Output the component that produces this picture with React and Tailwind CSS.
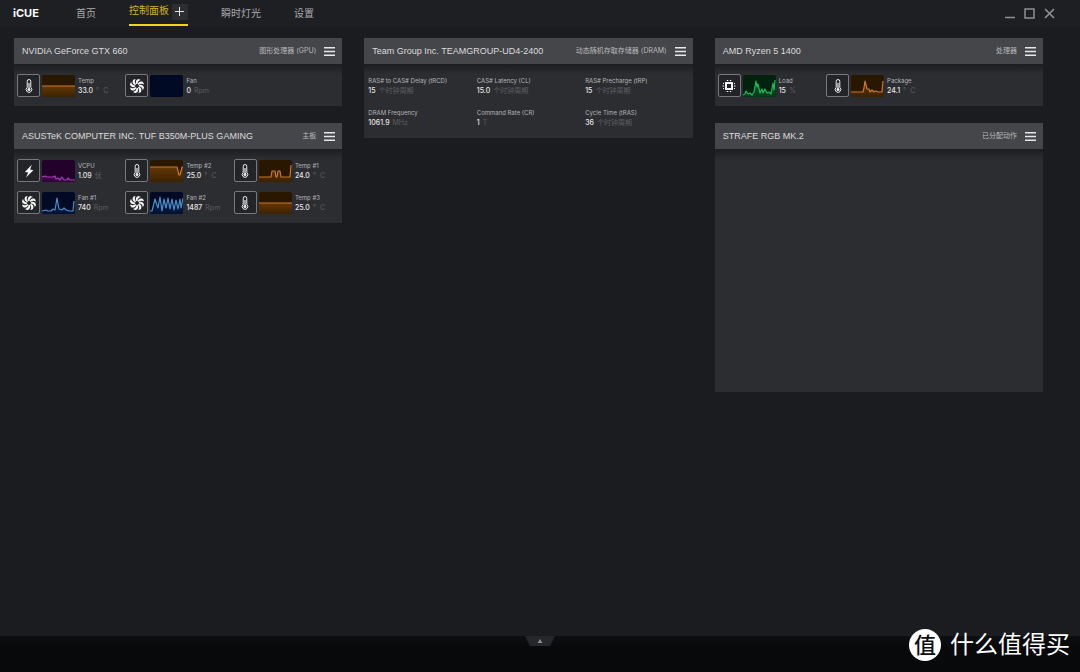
import React, { useState } from 'react';

const tabs = ['首页', '控制面板', '瞬时灯光', '设置'];

const columns = [
  [
    {
      title: 'NVIDIA GeForce GTX 660',
      kind: '图形处理器 (GPU)',
      sensors: [
        { icon: 'temp', color: 'orange', label: 'Temp', value: '33.0', unit: '°  C', line: '0,11 33,11' },
        { icon: 'fan', color: 'blue', label: 'Fan', value: '0', unit: 'Rpm', line: '' },
      ],
    },
    {
      title: 'ASUSTeK COMPUTER INC. TUF B350M-PLUS GAMING',
      kind: '主板',
      sensors: [
        { icon: 'volt', color: 'purple', label: 'VCPU', value: '1.09', unit: '伏', line: '0,17 3,16 5,17 11,17 13,16 14,19 16,18 18,20 20,17 22,20 25,20 26,18 28,20 33,20' },
        { icon: 'temp', color: 'orange', label: 'Temp #2', value: '25.0', unit: '°  C', line: '0,7 27,7 29,15 30,15 32,7 33,7' },
        { icon: 'temp', color: 'orange', label: 'Temp #1', value: '24.0', unit: '°  C', line: '0,17 12,17 13,11 16,11 17,17 18,17 19,11 21,11 22,17 31,17 32,5' },
        { icon: 'fan', color: 'blue', label: 'Fan #1', value: '740', unit: 'Rpm', line: '0,19 4,18 6,19 9,19 11,17 13,18 15,6 17,17 20,18 22,16 24,18 27,19 31,19 32,9' },
        { icon: 'fan', color: 'blue', label: 'Fan #2', value: '1487', unit: 'Rpm', line: '0,19 2,19 5,7 8,16 10,5 12,19 14,7 16,16 18,6 20,17 22,7 24,18 26,8 28,17 30,7 31,16 33,6' },
        { icon: 'temp', color: 'orange', label: 'Temp #3', value: '25.0', unit: '°  C', line: '0,11 33,11' },
      ],
    },
  ],
  [
    {
      title: 'Team Group Inc. TEAMGROUP-UD4-2400',
      kind: '动态随机存取存储器 (DRAM)',
      sensors: [
        { label: 'RAS# to CAS# Delay (tRCD)', value: '15', unit: '个时钟周期' },
        { label: 'CAS# Latency (CL)', value: '15.0', unit: '个时钟周期' },
        { label: 'RAS# Precharge (tRP)', value: '15', unit: '个时钟周期' },
        { label: 'DRAM Frequency', value: '1061.9', unit: 'MHz' },
        { label: 'Command Rate (CR)', value: '1', unit: 'T' },
        { label: 'Cycle Time (tRAS)', value: '36', unit: '个时钟周期' },
      ],
    },
  ],
  [
    {
      title: 'AMD Ryzen 5 1400',
      kind: '处理器',
      sensors: [
        { icon: 'cpu', color: 'green', label: 'Load', value: '15', unit: '%', line: '0,20 2,19 3,16 5,19 7,18 9,20 11,17 13,6 14,12 15,9 17,18 19,14 20,18 22,14 24,18 26,17 28,19 30,8 31,15 32,5' },
        { icon: 'temp', color: 'orange', label: 'Package', value: '24.1', unit: '°  C', line: '0,17 12,17 13,13 14,6 16,14 18,14 19,17 21,15 23,17 25,16 27,17 31,17 32,6' },
      ],
    },
    { title: 'STRAFE RGB MK.2', kind: '已分配动作', sensors: [] },
  ],
];

const chartColors = {
  orange: { bg: '#291700', fill: '#633803', low: '#3c2200', stroke: '#c9782e' },
  blue: { bg: '#010a24', fill: '#04204d', low: '#021233', stroke: '#4d8fc4' },
  purple: { bg: '#22022b', fill: '#4a0a56', low: '#2e053a', stroke: '#a63ab0' },
  green: { bg: '#02210f', fill: '#06602b', low: '#033a19', stroke: '#1fb85a' },
};

const blades = [0, 45, 90, 135, 180, 225, 270, 315];

const SensorIcon = ({ type }) => {
  if (type === 'temp') {
    return (
      <svg viewBox="0 0 16 16" className="w-4 h-4" fill="none" stroke="#eceded">
        <path d="M6.200 9.400V3.300a1.800 1.800 0 0 1 3.600 0v6.100a2.800 2.800 0 1 1-3.600 0Z" strokeWidth="1" />
        <path d="M8 5v6" strokeWidth="1.200" />
        <circle cx="8" cy="11.600" r="1.500" fill="#eceded" stroke="none" />
      </svg>
    );
  }
  if (type === 'fan') {
    return (
      <svg viewBox="0 0 16 16" className="w-4 h-4" fill="#f4f4f4">
        {blades.map((a) => (
          <path key={a} transform={`rotate(${a} 8 8)`} d="M7.200 6.100C6.200 4 6.900 1.800 9.400 1c1 .2 1.900.6 2.500 1.100C9.700 2.700 8.500 3.900 8.500 6.200Z" />
        ))}
      </svg>
    );
  }
  if (type === 'volt') {
    return (
      <svg viewBox="0 0 16 16" className="w-4 h-4" fill="#f4f4f4">
        <path d="M10.800 1.800 3.900 8.900l3.300.5-2.200 5 7.400-7.200-3.300-.6Z" />
      </svg>
    );
  }
  return (
    <svg viewBox="0 0 16 16" className="w-4 h-4" fill="none" stroke="#f4f4f4">
      <rect x="5" y="5" width="6" height="6" strokeWidth="2" />
      <path d="M6.500 3V2M9.500 3V2M6.500 13v1M9.500 13v1" strokeWidth="1.500" />
      <path d="M3 5.500H2M3 8H1.500M3 10.500H2M13 5.500h1M13 8h1.500M13 10.500h1" strokeWidth="1.200" />
    </svg>
  );
};

const Chart = ({ color, line, id }) => {
  const c = chartColors[color];
  return (
    <svg viewBox="0 0 33 22" className="w-[33px] h-[22px] rounded-xs shrink-0">
      <defs>
        <linearGradient id={id} x1="0" y1="0" x2="0" y2="1">
          <stop offset="0" stopColor={c.fill} />
          <stop offset="1" stopColor={c.low} />
        </linearGradient>
      </defs>
      <rect width="33" height="22" fill={c.bg} />
      {line && <polygon points={`0,22 ${line} 33,22`} fill={`url(#${id})`} />}
      <polyline points={line} fill="none" stroke={c.stroke} strokeWidth="1.200" strokeLinejoin="round" />
    </svg>
  );
};

const Sensor = ({ sensor, id }) => (
  <div className="flex items-center gap-[2px] h-[23px] min-w-0">
    {sensor.icon && (
      <>
        <div className="w-[23px] h-[23px] shrink-0 flex items-center justify-center rounded-xs border border-[#77787b] bg-[#232427]">
          <SensorIcon type={sensor.icon} />
        </div>
        <Chart color={sensor.color} line={sensor.line} id={id} />
      </>
    )}
    <div className="whitespace-nowrap pl-px pt-px">
      <div className="text-[6px] leading-[10px] text-[#b4b5b7]">{sensor.label}</div>
      <div className="text-[7px] leading-[10px] flex gap-[3px]">
        <span className="font-medium text-[#e6e6e7]">{sensor.value}</span>
        <span className="whitespace-pre text-[#5c5d60]">{sensor.unit}</span>
      </div>
    </div>
  </div>
);

const DeviceCard = ({ device, id }) => (
  <section>
    <header className="h-[26px] flex items-center justify-between pl-2 pr-[7px] pt-px bg-[#454649]">
      <h2 className="font-['Liberation_Sans',sans-serif] text-[9px] text-[#dcdcdd] whitespace-nowrap">{device.title}</h2>
      <div className="flex items-center gap-2">
        <span className="text-[7px] text-[#b9babc] whitespace-nowrap">{device.kind}</span>
        <button type="button" aria-label={device.title}>
          <svg viewBox="0 0 11 10" className="w-[11px] h-[10px]" fill="#e8e8e9">
            <path d="M0 0h11v1.600H0ZM0 3.700h11v1.600H0ZM0 7.400h11V9H0Z" />
          </svg>
        </button>
      </div>
    </header>
    <div className="bg-linear-to-b from-[#1c1d20] to-[#2c2d30] to-[10px]">
      {device.sensors.length > 0 ? (
        <div className="grid grid-cols-3 gap-y-[9px] pt-[10px] pb-[9px] pl-[3px]">
          {device.sensors.map((s, i) => (
            <Sensor key={s.label} sensor={s} id={`${id}-${i}`} />
          ))}
        </div>
      ) : (
        <div className="h-[243px]" />
      )}
    </div>
  </section>
);

export default function App() {
  const [active, setActive] = useState('控制面板');

  return (
    <div className="relative min-h-screen flex flex-col bg-[#1b1c20] font-['Inter','Noto_Sans_CJK_SC',sans-serif]">
      <header className="h-[26px] flex items-center justify-between pl-[13px] pr-[25px] bg-[#1e1f23]">
        <div className="flex items-center h-full">
          <h1 className="w-[63px] text-[11px] font-bold text-white">iCUE</h1>
          <nav className="flex h-full gap-[33px] text-[10px] text-[#a9aaac]">
            {tabs.map((tab) =>
              tab === active ? (
                <div key={tab} className="flex items-center gap-[3px] border-b-2 border-[#f0d31c]">
                  <button type="button" className="pb-1 text-[#d3b51b]">{tab}</button>
                  <button type="button" aria-label="+" className="w-4 h-4 flex items-center justify-center bg-[#2d2e32]">
                    <svg viewBox="0 0 10 10" className="w-[10px] h-[10px]" stroke="#e4e4e5" strokeWidth="1">
                      <path d="M4.500 0v9M0 4.500h9" />
                    </svg>
                  </button>
                </div>
              ) : (
                <button key={tab} type="button" onClick={() => setActive(tab)}>{tab}</button>
              )
            )}
          </nav>
        </div>
        <div className="flex items-center gap-[9px]">
          <button type="button" aria-label="minimize">
            <svg viewBox="0 0 11 11" className="w-[11px] h-[11px]" stroke="#8f9093" strokeWidth="1.500">
              <path d="M1 9.500h10" />
            </svg>
          </button>
          <button type="button" aria-label="maximize">
            <svg viewBox="0 0 11 11" className="w-[11px] h-[11px]" fill="none" stroke="#8f9093" strokeWidth="1.500">
              <rect x="1" y="1" width="9" height="9" />
            </svg>
          </button>
          <button type="button" aria-label="close">
            <svg viewBox="0 0 11 11" className="w-[11px] h-[11px]" stroke="#8f9093" strokeWidth="1.700">
              <path d="M1 1l9 9M10 1l-9 9" />
            </svg>
          </button>
        </div>
      </header>

      <main className="flex-1 grid grid-cols-3 items-start gap-[22px] pt-3 pl-[14px] pr-[37px]">
        {columns.map((devices, col) => (
          <div key={col} className="flex flex-col gap-[17px]">
            {devices.map((d, i) => (
              <DeviceCard key={d.title} device={d} id={`chart-${col}-${i}`} />
            ))}
          </div>
        ))}
      </main>

      <footer className="h-9 flex justify-center items-start bg-linear-to-b from-[#0e0f11] to-[#08090b] to-[12px]">
        <button type="button" aria-label="expand">
          <svg viewBox="0 0 30 10" className="w-[30px] h-[10px]">
            <path d="M0 0h30l-5 10H5Z" fill="#26272b" />
            <path d="M15 3l2.500 4h-5Z" fill="#8b8c8f" />
          </svg>
        </button>
      </footer>

      <div className="absolute right-[10px] bottom-[11px] flex items-center gap-[9px] text-white">
        <span className="w-8 h-8 flex items-center justify-center rounded-full bg-white text-[#0d0e10] text-[22px] leading-8 font-medium">值</span>
        <span className="text-[24px] leading-8">什么值得买</span>
      </div>
    </div>
  );
}
